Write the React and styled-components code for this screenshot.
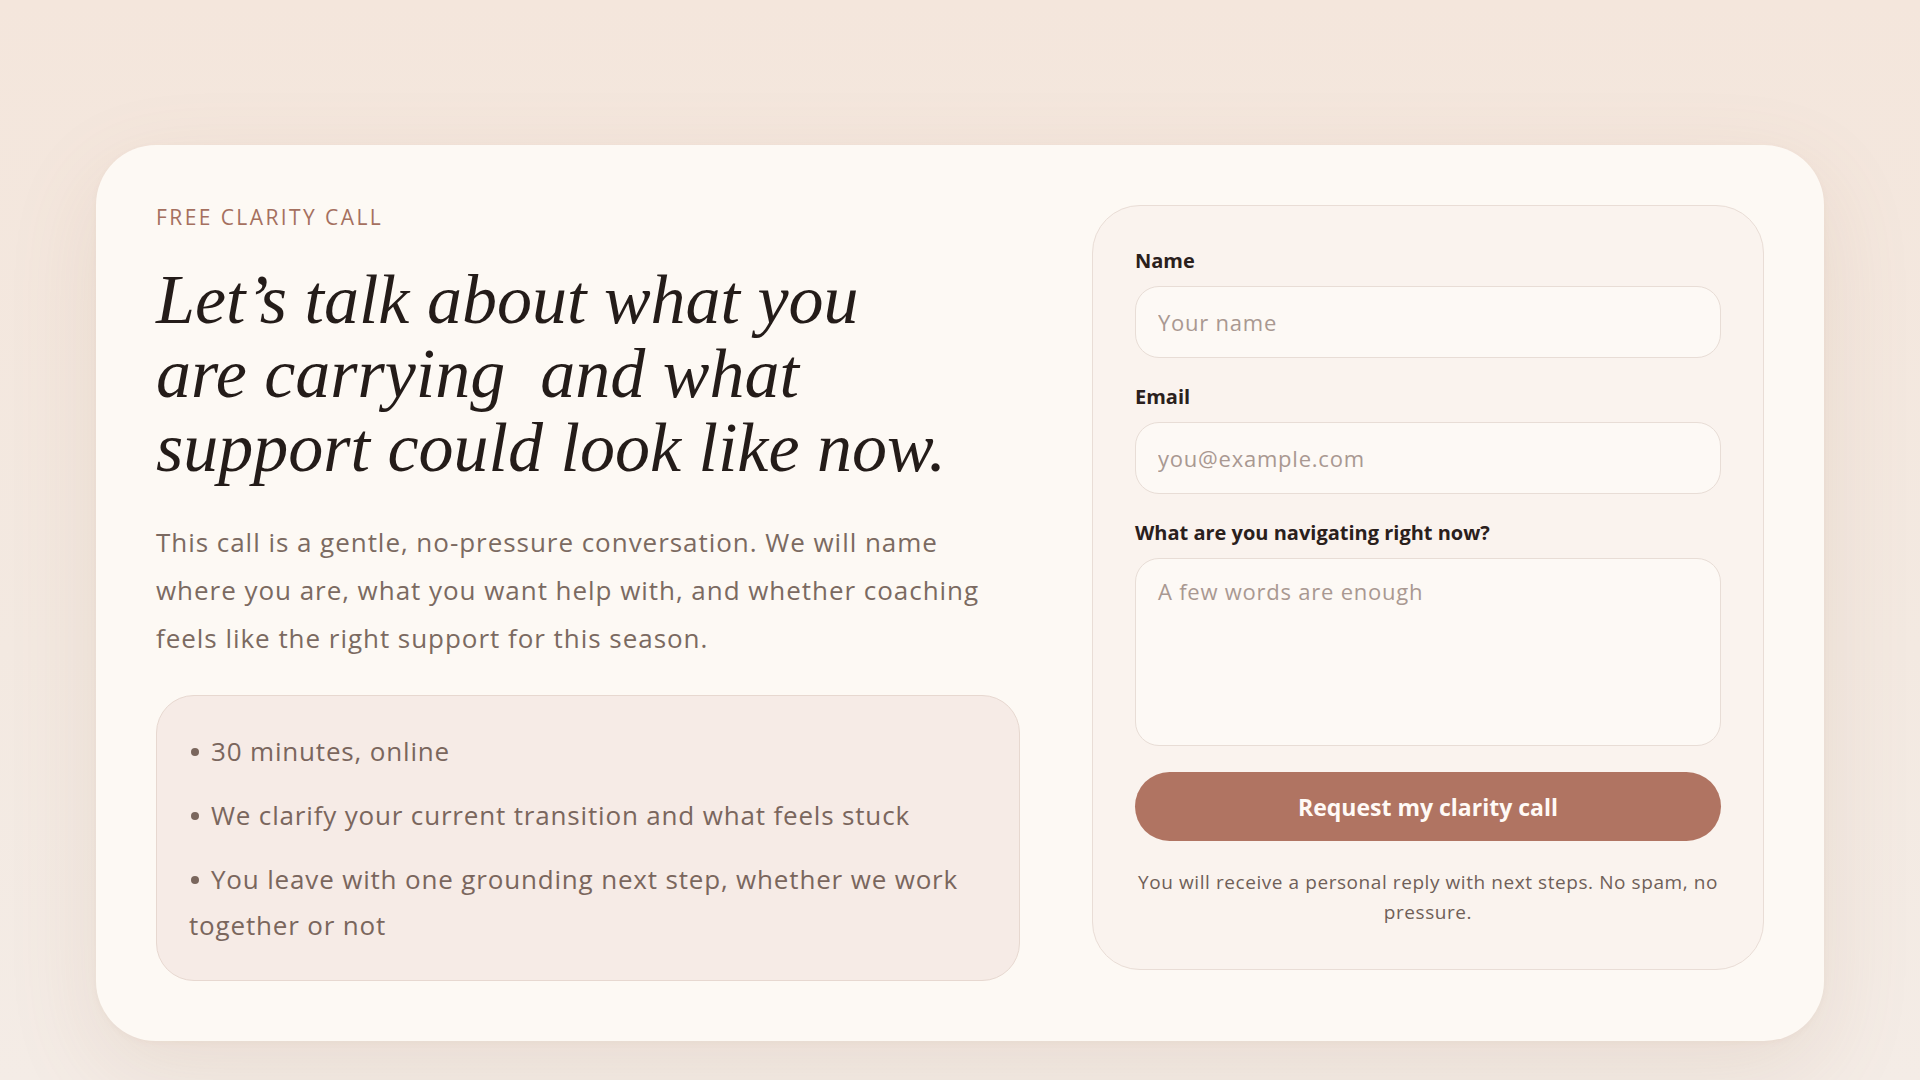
import React from 'react'
import styled, { createGlobalStyle } from 'styled-components'

const GlobalStyle = createGlobalStyle`
    * {
        box-sizing: border-box;
    }
    body {
        margin: 0;
        font-family: "Open Sans", "Noto Sans", sans-serif;
        background: #f3e8df;
    }
`

export const Page = styled.div`
    min-height: 100vh;
    padding: 145px 0 40px;
    background: linear-gradient(180deg, #f4e6dc 0%, #f3e9e1 60%, #f4ece6 100%);
`

export const Card = styled.section`
    width: 1728px;
    margin: 0 auto;
    padding: 60px;
    background: #fdf9f4;
    border-radius: 60px;
    box-shadow: 0 30px 90px rgba(160, 115, 85, 0.13), 0 2px 6px rgba(160, 115, 85, 0.05);
    display: grid;
    grid-template-columns: 1fr 672px;
    column-gap: 72px;
    align-items: start;
`

export const Intro = styled.div`
    display: flex;
    flex-direction: column;
`

export const Eyebrow = styled.div`
    font-size: 21px;
    line-height: 24px;
    letter-spacing: 0.115em;
    text-transform: uppercase;
    color: #a5705f;
`

export const Title = styled.h1`
    margin: 34px 0 0;
    font-family: "Liberation Serif", "Times New Roman", serif;
    font-style: italic;
    font-weight: 400;
    font-size: 70px;
    line-height: 74px;
    color: #241c19;
`

export const Lead = styled.p`
    margin: 33px 0 0;
    font-size: 26px;
    line-height: 48px;
    letter-spacing: 0.037em;
    color: #7b6a61;
`

export const Points = styled.ul`
    list-style: none;
    margin: 33px 0 0;
    padding: 32px;
    background: #f6ebe6;
    border: 1.5px solid #e7d8d0;
    border-radius: 38px;
    display: flex;
    flex-direction: column;
    gap: 18px;
`

export const Point = styled.li`
    font-size: 26px;
    line-height: 46px;
    letter-spacing: 0.032em;
    color: #7a665d;
`

export const Dot = styled.span`
    display: inline-block;
    width: 8px;
    height: 8px;
    margin: 0 12px 4px 2px;
    border-radius: 50%;
    background: #7a665d;
    vertical-align: middle;
`

export const FormPanel = styled.form`
    padding: 42px;
    background: #faf3ee;
    border: 1.5px solid #e9ddd6;
    border-radius: 48px;
    display: flex;
    flex-direction: column;
    gap: 26px;
`

export const Field = styled.label`
    display: flex;
    flex-direction: column;
    gap: 12px;
`

export const FieldLabel = styled.span`
    font-size: 20px;
    line-height: 26px;
    font-weight: 700;
    color: #2a201c;
`

const fieldBase = `
    width: 100%;
    border: 1.5px solid #e8ddd6;
    background: #fdf9f5;
    border-radius: 24px;
    font-family: "Open Sans", "Noto Sans", sans-serif;
    font-size: 22px;
    letter-spacing: 0.035em;
    color: #3a2e29;
    outline: none;
    &::placeholder {
        color: #a99891;
    }
`

export const Input = styled.input`
    ${fieldBase}
    height: 72px;
    padding: 0 22px;
`

export const TextArea = styled.textarea`
    ${fieldBase}
    height: 188px;
    padding: 17px 22px;
    resize: none;
    line-height: 30px;
`

export const Submit = styled.button`
    height: 69px;
    border: none;
    border-radius: 999px;
    background: #b07462;
    color: #fffaf6;
    font-family: "Open Sans", "Noto Sans", sans-serif;
    font-size: 23px;
    font-weight: 700;
    cursor: pointer;
`

export const Note = styled.p`
    margin: 0;
    text-align: center;
    font-size: 19px;
    line-height: 30px;
    letter-spacing: 0.03em;
    color: #6f5f58;
`

export default function App() {
    return (
        <>
            <GlobalStyle />
            <Page>
                <Card>
                    <Intro>
                        <Eyebrow>Free clarity call</Eyebrow>
                        <Title>
                            Let’s talk about what you<br />
                            are carrying{'\u00a0'} and what<br />
                            support could look like now.
                        </Title>
                        <Lead>
                            This call is a gentle, no-pressure conversation. We will name<br />
                            where you are, what you want help with, and whether coaching<br />
                            feels like the right support for this season.
                        </Lead>
                        <Points>
                            <Point><Dot />30 minutes, online</Point>
                            <Point><Dot />We clarify your current transition and what feels stuck</Point>
                            <Point><Dot />You leave with one grounding next step, whether we work<br />together or not</Point>
                        </Points>
                    </Intro>
                    <FormPanel onSubmit={(e) => e.preventDefault()}>
                        <Field>
                            <FieldLabel>Name</FieldLabel>
                            <Input type="text" placeholder="Your name" />
                        </Field>
                        <Field>
                            <FieldLabel>Email</FieldLabel>
                            <Input type="email" placeholder="you@example.com" />
                        </Field>
                        <Field>
                            <FieldLabel>What are you navigating right now?</FieldLabel>
                            <TextArea placeholder="A few words are enough" />
                        </Field>
                        <Submit type="submit">Request my clarity call</Submit>
                        <Note>You will receive a personal reply with next steps. No spam, no<br />pressure.</Note>
                    </FormPanel>
                </Card>
            </Page>
        </>
    )
}
